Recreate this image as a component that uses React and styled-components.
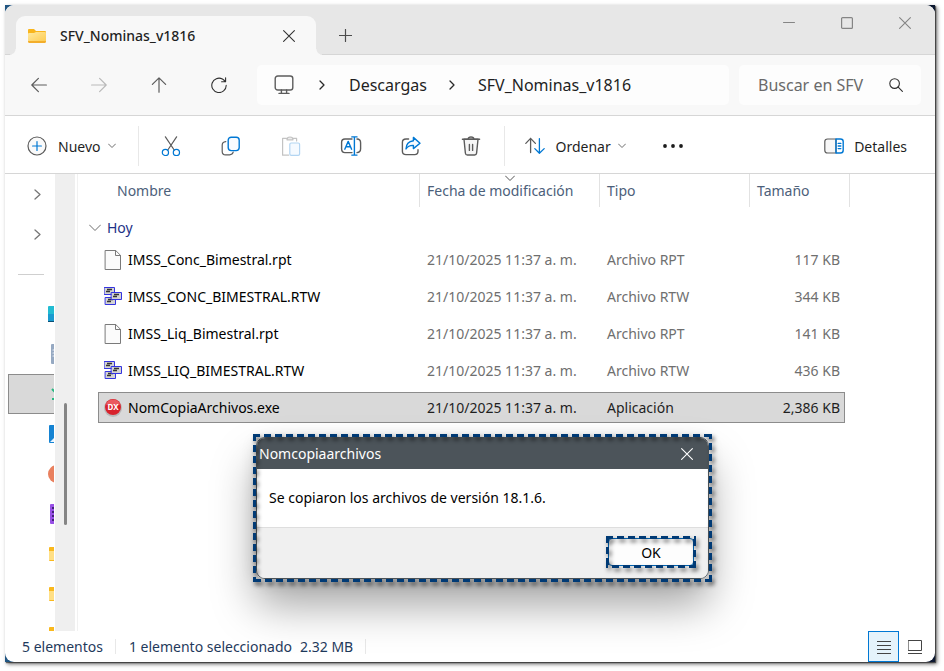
import React from 'react';
import styled, { createGlobalStyle, css } from 'styled-components';

const colors = {
    strip: '#e7e7e7',
    nav: '#f8f8f8',
    line: '#d6d6d6',
    text: '#1f1f1f',
    muted: '#6f6f6f',
    header: '#4c607a',
    group: '#1e3287',
    status: '#1f3a5c',
    selected: '#d9d9d9',
    selectedLine: '#8c8c8c',
    blue: '#0078d4',
    ink: '#5c5c5c',
    navy: '#003a75',
    slate: '#4c545a'
};

const GlobalStyle = createGlobalStyle`
    * {
        box-sizing: border-box;
    }
    body {
        margin: 0;
        background: #fff;
    }
    body, button, input {
        font-family: 'Noto Sans', 'Open Sans', sans-serif;
        font-size: 14px;
        color: ${colors.text};
    }
`;

const Page = styled.div`
    display: flex;
    height: 100vh;
    padding: 5px 9px 9px 5px;
`;
const Backdrop = styled.div`
    position: relative;
    display: flex;
    flex: 1;
    min-width: 0;
    background: linear-gradient(to right, #205582 0%, #0b1730 50%);
    box-shadow: 1px 1px 1px rgba(0, 0, 0, 0.5), 2px 2px 4px rgba(0, 0, 0, 0.6);
`;
const Window = styled.main`
    display: flex;
    flex-direction: column;
    flex: 1;
    min-width: 0;
    overflow: hidden;
    border-radius: 9px;
    background: #fff;
`;
const PlainButton = styled.button`
    display: flex;
    align-items: center;
    justify-content: center;
    padding: 0;
    border: 0;
    background: none;
`;

const TabStrip = styled.header`
    display: flex;
    align-items: flex-end;
    height: 50px;
    padding: 0 1px 0 11px;
    border-bottom: 1px solid ${colors.line};
    background: ${colors.strip};
`;
const Tab = styled.div`
    position: relative;
    display: flex;
    align-items: center;
    gap: 14px;
    width: 300px;
    height: 39px;
    margin-bottom: -1px;
    padding: 0 21px 0 12px;
    border-radius: 9px 9px 0 0;
    background: ${colors.nav};
    &::before, &::after {
        content: '';
        position: absolute;
        bottom: 0;
        width: 6px;
        height: 6px;
    }
    &::before {
        right: 100%;
        background: radial-gradient(circle at 0 0, transparent 5px, ${colors.nav} 6px);
    }
    &::after {
        left: 100%;
        background: radial-gradient(circle at 100% 0, transparent 5px, ${colors.nav} 6px);
    }
`;
const TabTitle = styled.span`
    flex: 1;
    font-weight: 500;
`;
const NewTab = styled(PlainButton)`
    width: 58px;
    height: 38px;
`;
const Caption = styled.div`
    display: flex;
    align-self: flex-start;
    margin-left: auto;
`;
const CaptionButton = styled(PlainButton)`
    width: 58px;
    height: 36px;
`;

const NavBar = styled.nav`
    display: flex;
    align-items: center;
    gap: 10px;
    height: 61px;
    padding-right: 14px;
    border-bottom: 1px solid ${colors.line};
    background: ${colors.nav};
`;
const NavButtons = styled.div`
    display: flex;
    padding-left: 4px;
`;
const NavButton = styled(PlainButton)`
    width: 60px;
    height: 40px;
`;
const Address = styled.div`
    display: flex;
    align-items: center;
    flex: 1;
    height: 40px;
    margin-left: -2px;
    padding-left: 17px;
    border-radius: 5px;
    background: #fdfdfd;
`;
const Crumb = styled.a`
    font-size: 16px;
    color: ${colors.text};
    text-decoration: none;
`;
const CrumbArrow = styled.span`
    display: flex;
    justify-content: center;
    width: ${props => props.$width}px;
`;
const Search = styled.label`
    display: flex;
    align-items: center;
    width: 182px;
    height: 40px;
    padding: 0 18px 0 19px;
    border-radius: 5px;
    background: #fdfdfd;
`;
const SearchInput = styled.input`
    flex: 1;
    min-width: 0;
    margin-right: 24px;
    padding: 0;
    border: 0;
    outline: 0;
    background: none;
    font-size: 16px;
    &::placeholder {
        color: #6a6a6a;
        opacity: 1;
    }
`;

const Toolbar = styled.div`
    display: flex;
    align-items: center;
    height: 58px;
    padding: 3px 28px 0 22px;
    border-bottom: 1px solid ${colors.line};
    background: #fff;
`;
const ToolButton = styled(PlainButton)`
    gap: 11px;
    height: 40px;
`;
const IconButton = styled(PlainButton)`
    width: 60px;
    height: 40px;
`;
const MoreButton = styled(IconButton)`
    width: 20px;
    margin-left: 37px;
`;
const MenuLabel = styled.span`
    display: flex;
    align-items: center;
    gap: 7px;
`;
const Divider = styled.span`
    flex: none;
    width: 1px;
    height: ${props => props.$height}px;
    margin: 0 ${props => props.$after}px 0 ${props => props.$before}px;
    background: #e8e8e8;
`;
const Details = styled(ToolButton)`
    gap: 10px;
    margin-left: auto;
`;

const Content = styled.div`
    display: flex;
    flex: 1;
    min-height: 0;
`;
const Sidebar = styled.ul`
    width: 49px;
    margin: 0;
    padding: 0 0 0 3px;
    overflow: hidden;
    list-style: none;
`;
const SideItem = styled.li`
    display: flex;
    align-items: center;
    height: 40px;
    padding-left: ${props => props.$indent}px;
    overflow: hidden;
    border: 1px solid transparent;
    border-right: 0;
    ${props => props.$selected && css`
        border-color: ${colors.selectedLine};
        background: ${colors.selected};
    `}
    svg {
        flex: none;
    }
`;
const SideRule = styled.hr`
    width: 26px;
    margin: 0;
    border: 0;
    border-top: 1px solid #cfcfcf;
`;
const ScrollTrack = styled.div`
    display: flex;
    flex-direction: column;
    align-items: center;
    width: 20px;
    margin: 0 2px 0 1px;
    background: #efefef;
`;
const ScrollThumb = styled.div`
    width: 3px;
    height: 122px;
    margin-top: 229px;
    border-radius: 2px;
    background: #858585;
`;
const FilePane = styled.section`
    flex: 1;
    min-width: 0;
    padding: 0 90px 0 20px;
    border-left: 1px solid #f1f1f1;
`;

const FileTable = styled.table`
    display: block;
    thead, tbody {
        display: block;
    }
`;
const Row = styled.tr`
    display: grid;
    grid-template-columns: minmax(200px, 1fr) 180px 150px 95px;
    align-items: center;
`;
const HeadRow = styled(Row)`
    align-items: stretch;
    height: 33px;
    margin-right: -5px;
    grid-template-columns: minmax(200px, 1fr) 180px 150px 100px;
`;
const HeadCell = styled.th`
    position: relative;
    padding: 7px 0 0 ${props => props.$indent || 7}px;
    border-right: 1px solid #e2e2e2;
    line-height: 20px;
    font-weight: 400;
    text-align: left;
    color: ${colors.header};
`;
const SortMark = styled.span`
    position: absolute;
    top: 1px;
    left: 0;
    right: 0;
    display: flex;
    justify-content: center;
`;
const GroupCell = styled.th`
    display: flex;
    align-items: center;
    gap: 6px;
    height: 37px;
    padding: 4px 0 0;
    margin-left: -9px;
    font-weight: 400;
    color: ${colors.group};
`;
const FileRow = styled(Row)`
    height: 31px;
    margin-bottom: 6px;
    border: 1px solid transparent;
    color: ${colors.muted};
    &:last-child {
        margin-bottom: 0;
    }
    ${props => props.$selected && css`
        border-color: ${colors.selectedLine};
        background: ${colors.selected};
        color: ${colors.text};
    `}
`;
const Cell = styled.td`
    padding: 1px 4px 0 8px;
    line-height: 20px;
    white-space: nowrap;
    text-align: ${props => (props.$right ? 'right' : 'left')};
`;
const NameCell = styled(Cell)`
    display: flex;
    align-items: center;
    gap: 6px;
    padding-left: 5px;
    color: #000;
`;

const StatusBar = styled.footer`
    display: flex;
    align-items: center;
    height: 31px;
    padding: 0 5px 0 17px;
    color: ${colors.status};
`;
const StatusSize = styled.span`
    margin-left: 8px;
`;
const Views = styled.div`
    display: flex;
    margin-left: auto;
`;
const ViewButton = styled(PlainButton)`
    width: 31px;
    height: 31px;
    ${props => props.$active && css`
        border: 1px solid ${colors.blue};
        background: #e5f3fb;
    `}
`;

const dash = angle => `repeating-linear-gradient(${angle}, ${colors.navy} 0 7px, transparent 7px 11px)`;

// dashed highlight drawn around the dialog and its button
const highlight = css`
    &::before {
        content: '';
        position: absolute;
        inset: -3px;
        background:
            ${dash('90deg')} top / 100% 3px no-repeat,
            ${dash('270deg')} bottom / 100% 3px no-repeat,
            ${dash('180deg')} left / 3px 100% no-repeat,
            ${dash('0deg')} right / 3px 100% no-repeat;
        filter: drop-shadow(2px 3px 2px rgba(0, 0, 0, 0.6));
        pointer-events: none;
    }
`;
const Dialog = styled.div`
    position: absolute;
    top: 432px;
    left: 251px;
    width: 453px;
    border-radius: 9px;
    box-shadow: 0 26px 44px rgba(0, 0, 0, 0.36), 0 2px 16px rgba(0, 0, 0, 0.14);
    ${highlight}
`;
const DialogBox = styled.div`
    overflow: hidden;
    border: 1px solid ${colors.slate};
    border-radius: 9px;
    background: #fff;
`;
const DialogTitle = styled.div`
    display: flex;
    align-items: center;
    justify-content: space-between;
    height: 31px;
    padding: 0 15px 0 2px;
    background: ${colors.slate};
    color: #fff;
`;
const DialogText = styled.p`
    margin: 0;
    padding: 19px 12px;
    line-height: 20px;
    color: #000;
`;
const DialogFooter = styled.div`
    display: flex;
    justify-content: flex-end;
    padding: 10px 14px 12px;
    border-top: 1px solid #dedede;
    background: #f0f0f0;
`;
const OkButton = styled.button`
    position: relative;
    width: 86px;
    height: 28px;
    padding: 0;
    border: 1px solid #0067b8;
    border-radius: 4px;
    background: #fdfdfd;
    color: #000;
    ${highlight}
`;

const Svg = ({ w = 20, h = w, stroke = colors.ink, sw = 1.2, children }) => (
    <svg width={w} height={h} viewBox={`0 0 ${w} ${h}`} fill="none" stroke={stroke} strokeWidth={sw}
        strokeLinecap="round" strokeLinejoin="round" aria-hidden="true">
        {children}
    </svg>
);

const FolderIcon = () => (
    <Svg w={18} h={16} stroke="none">
        <defs>
            <linearGradient id="folder" x1="0" y1="0" x2="1" y2="1">
                <stop offset="0" stopColor="#ffe9a0" />
                <stop offset="1" stopColor="#fdcb4f" />
            </linearGradient>
        </defs>
        <path d="M0 2q0-1 1-1h5l2 2h9q1 0 1 1v10H0z" fill="#f9b51c" />
        <path d="M0 6q0-1 1-1h5l2-1h9q1 0 1 1v8q0 1-1 1H1q-1 0-1-1z" fill="url(#folder)" />
        <path d="M0 13q0 2 1 2h16q1 0 1-2z" fill="#f3ae2b" />
    </Svg>
);
const CloseIcon = ({ size = 12, stroke = '#333', sw = 1.1 }) => (
    <Svg w={size} stroke={stroke} sw={sw}>
        <path d={`M.6.6 ${size - 0.6} ${size - 0.6}M${size - 0.6} .6.6 ${size - 0.6}`} />
    </Svg>
);
const PlusIcon = () => <Svg w={13} stroke="#4c4c4c"><path d="M6.5.5v12M.5 6.5h12" /></Svg>;
const MinimizeIcon = () => <Svg w={12} stroke="#858585" sw={1}><path d="M.5 5.5h11" /></Svg>;
const MaximizeIcon = () => <Svg w={12} stroke="#858585"><rect x=".6" y=".6" width="10.8" height="10.8" rx="1" /></Svg>;
const BackIcon = () => <Svg w={16}><path d="M15.4 8H.8M7.4 1.4.8 8l6.6 6.6" /></Svg>;
const ForwardIcon = () => <Svg w={16} stroke="#b9b9b9"><path d="M.6 8h14.6M8.6 1.4 15.2 8l-6.6 6.6" /></Svg>;
const UpIcon = () => <Svg w={16}><path d="M8 15.2V.8M1.4 7.4 8 .8l6.6 6.6" /></Svg>;
const RefreshIcon = () => (
    <Svg w={16} stroke="#303030" sw={1.1}>
        <path d="M15.2 8.4A7.2 7.2 0 1 1 11.4 2q1.4.8 2.8 2.4M14.6.8v4h-4" />
    </Svg>
);
const MonitorIcon = () => (
    <Svg w={20} sw={1.4}>
        <rect x="1.2" y="1" width="17.6" height="14" rx="2.6" />
        <path d="M7.4 15v3M12.6 15v3M5 18.4h10" />
    </Svg>
);
const ChevronRight = ({ stroke = '#2a2a2a', w = 6, h = 10 }) => (
    <Svg w={w} h={h} stroke={stroke} sw={1.3}><path d={`M1 1 ${w - 1} ${h / 2} 1 ${h - 1}`} /></Svg>
);
const ChevronDown = ({ w = 8, stroke = '#6d6d6d' }) => (
    <Svg w={w} h={w / 2 + 2} stroke={stroke} sw={1}><path d={`M.5 1 ${w / 2} ${w / 2 + 0.5} ${w - 0.5} 1`} /></Svg>
);
const SearchIcon = () => (
    <Svg w={14} stroke="#303030" sw={1.1}><circle cx="5.6" cy="5.6" r="4.8" /><path d="m9.2 9.2 4.2 4.2" /></Svg>
);
const NewIcon = () => (
    <Svg w={20}>
        <circle cx="10" cy="10" r="9" fill="#fafafa" />
        <path d="M10 5.6v8.8M5.6 10h8.8" stroke={colors.blue} />
    </Svg>
);
const CutIcon = () => (
    <Svg w={20}>
        <path d="M4.4.8 13.2 14M15.6.8 6.8 14" />
        <g stroke={colors.blue}>
            <circle cx="4.4" cy="16.4" r="3.1" />
            <circle cx="15.4" cy="16.4" r="3.1" />
        </g>
    </Svg>
);
const CopyIcon = () => (
    <Svg w={20}>
        <path d="M4.8 5.6Q1.2 6 1.2 9v6.4q0 3.4 3.4 3.4h4q3 0 3.6-2.6" />
        <rect x="7.2" y="1.2" width="11" height="13.4" rx="3" fill="#f8fbff" stroke={colors.blue} strokeWidth="1.4" />
    </Svg>
);
const PasteIcon = () => (
    <Svg w={20} stroke="#c3c3c3">
        <path d="M6 2.4H1.6v16.8h6M12 2.4h3.6V5" />
        <path d="M6 3.8q0-2.8 3-2.8t3 2.8z" fill="#eee" />
        <rect x="8.8" y="7" width="9.8" height="12.4" rx="1.4" fill="#f5faff" stroke="#b3d5f2" />
    </Svg>
);
const RenameIcon = () => (
    <Svg w={22} h={20} sw={1.4}>
        <path d="M12 3H5Q1.6 3 1.6 6.4v6.4Q1.6 16.6 5 16.6h7M17 3q3.6.2 3.6 3.8v6q0 3.6-3.6 3.8" />
        <g stroke={colors.blue}>
            <path d="M4.8 13.2 8.2 5.4l3.4 7.8M6 10.8h4.4M14.4.9v18.2M11.8.9h5.2M11.8 19.1h5.2" />
        </g>
    </Svg>
);
const ShareIcon = () => (
    <Svg w={20} sw={1.4}>
        <path d="M7.6 3H5Q1.4 3 1.4 6.4v8.8q0 3.4 3.6 3.4h8.6q3.4 0 3.4-3.4v-1.4" />
        <path d="M12.4 1.4 19 7.2l-6.6 5.4V9.4q-5-.2-7.4 3.6.2-7.2 7.4-8.2z" fill="#f5faff" stroke={colors.blue} />
    </Svg>
);
const DeleteIcon = () => (
    <Svg w={20} sw={1.4}>
        <path d="M1.4 3.2h17.2M7.2 3q0-2 2.8-2t2.8 2" />
        <path d="m3 3.2 1.4 14q.2 1.8 2 1.8h7.2q1.8 0 2-1.8L17 3.2z" fill="#f6f6f6" />
        <path d="M8.4 8.4v6M11.6 8.4v6" />
    </Svg>
);
const SortIcon = () => (
    <Svg w={20} h={18} sw={1.3}>
        <path d="M5.6 15.6V1.4M.8 6.4l4.8-5 4.8 5" />
        <path d="M14.4 1.6v14.6M9.8 11.6l4.6 4.6 4.8-4.6" stroke={colors.blue} />
    </Svg>
);
const MoreIcon = () => (
    <Svg w={20} h={4} stroke="none">
        <g fill="#1c1c1c"><circle cx="2" cy="2" r="1.9" /><circle cx="10" cy="2" r="1.9" /><circle cx="18" cy="2" r="1.9" /></g>
    </Svg>
);
const DetailsIcon = () => (
    <Svg w={20} h={16}>
        <path d="M12 1H3.6Q.8 1 .8 3.6v8.6q0 2.8 2.8 2.8H12z" fill="#f7f7f7" />
        <path d="M12 1h4.4q2.8 0 2.8 2.6v8.6q0 2.8-2.8 2.8H12zM14.2 5.4h2.6M14.2 8h2.6M14.2 10.6h2.6" stroke={colors.blue} strokeWidth="1.4" />
    </Svg>
);

const PageIcon = () => (
    <Svg w={18} h={20} stroke="#7a7a7a" sw={1}>
        <path d="M1.5.5h10.2l4.8 4.8v14.2h-15z" fill="#fbfbfb" strokeLinejoin="miter" />
        <path d="M11.5.5v5h5" />
    </Svg>
);
const Sheet = ({ x, y }) => (
    <g>
        <rect x={x + 0.5} y={y + 0.5} width="10" height="7" fill="#d4d4d4" stroke="#3434e0" />
        <path d={`M${x + 3} ${y + 2.5}h5M${x + 2} ${y + 4.5}h4`} stroke="#333" strokeLinecap="butt" strokeWidth="1.4" />
    </g>
);
const ReportIcon = () => (
    <Svg w={18} h={20} sw={1}>
        <Sheet x={0} y={0} />
        <Sheet x={1} y={10} />
        <Sheet x={7} y={5} />
    </Svg>
);
const ExeIcon = () => (
    <Svg w={18} h={20} stroke="none">
        <circle cx="9" cy="10" r="9" fill="#b9b9b9" />
        <circle cx="9" cy="9" r="8" fill="#d8222c" />
        <path d="M1.8 6.4a7.8 7.8 0 0 1 14.4 0q-7 2-14.4 0z" fill="#ea5a60" />
        <text x="9" y="12" fontSize="8" fontWeight="700" textAnchor="middle" fill="#fff">DX</text>
    </Svg>
);

const DesktopIcon = () => (
    <Svg w={18} h={16} stroke="none">
        <rect width="18" height="16" rx="1" fill="#22bcd2" />
        <path d="M0 8h18v7H0z" fill="#1a9bd0" /><path d="M0 15h18v1H0z" fill="#0c4f74" />
    </Svg>
);
const DocumentIcon = () => (
    <Svg w={12} h={20} stroke="none">
        <rect width="12" height="20" rx="1" fill="#96a9c2" />
        <path d="M2 6h8M2 9h8M2 12h8" stroke="#e7edf5" />
    </Svg>
);
const DownloadIcon = () => (
    <Svg w={16} h={14} stroke="#28b883" sw={2}><path d="m1 2 6 6 6-6M1 12h14" strokeLinecap="butt" /></Svg>
);
const PicturesIcon = () => (
    <Svg w={18} h={18} stroke="none">
        <rect width="18" height="18" rx="1" fill="#1583d2" /><path d="m1 17 8-8 8 8z" fill="#eaf5ff" />
    </Svg>
);
const MusicIcon = () => <Svg w={18} stroke="none"><circle cx="9" cy="9" r="9" fill="#e9805e" /></Svg>;
const VideosIcon = () => (
    <Svg w={18} h={20} stroke="none">
        <rect width="18" height="20" rx="1" fill="#9850e6" />
        <path d="M3 3v16" stroke="#43217a" strokeWidth="2" strokeDasharray="2 2" strokeLinecap="butt" />
    </Svg>
);
const SideFolderIcon = () => (
    <Svg w={18} h={14} stroke="none">
        <rect width="18" height="14" rx="1" fill="#f9b81d" /><path d="M0 4h18v9H0z" fill="#ffdf85" />
    </Svg>
);
const ListViewIcon = () => (
    <Svg w={14} h={14} stroke="#444" sw={1}><path d="M0 1.5h14M0 5.5h14M0 9.5h14M0 13.5h14" strokeLinecap="butt" /></Svg>
);
const TileViewIcon = () => (
    <Svg w={14} h={14} stroke="#444" sw={1}><rect x=".5" y=".5" width="13" height="10" /><path d="M0 13.5h14" /></Svg>
);

const sideItems = [
    { icon: DesktopIcon, indent: 39 },
    { icon: DocumentIcon, indent: 42 },
    { icon: DownloadIcon, indent: 42, selected: true },
    { icon: PicturesIcon, indent: 40 },
    { icon: MusicIcon, indent: 39 },
    { icon: VideosIcon, indent: 41 },
    { icon: SideFolderIcon, indent: 40 },
    { icon: SideFolderIcon, indent: 40 },
    { icon: SideFolderIcon, indent: 40 }
];

const files = [
    { icon: PageIcon, name: 'IMSS_Conc_Bimestral.rpt', type: 'Archivo RPT', size: '117 KB' },
    { icon: ReportIcon, name: 'IMSS_CONC_BIMESTRAL.RTW', type: 'Archivo RTW', size: '344 KB' },
    { icon: PageIcon, name: 'IMSS_Liq_Bimestral.rpt', type: 'Archivo RPT', size: '141 KB' },
    { icon: ReportIcon, name: 'IMSS_LIQ_BIMESTRAL.RTW', type: 'Archivo RTW', size: '436 KB' },
    { icon: ExeIcon, name: 'NomCopiaArchivos.exe', type: 'Aplicación', size: '2,386 KB', selected: true }
];

const Tabs = () => (
    <TabStrip>
        <Tab>
            <FolderIcon />
            <TabTitle>SFV_Nominas_v1816</TabTitle>
            <PlainButton aria-label="Cerrar pestaña"><CloseIcon /></PlainButton>
        </Tab>
        <NewTab aria-label="Nueva pestaña"><PlusIcon /></NewTab>
        <Caption>
            <CaptionButton aria-label="Minimizar"><MinimizeIcon /></CaptionButton>
            <CaptionButton aria-label="Maximizar"><MaximizeIcon /></CaptionButton>
            <CaptionButton aria-label="Cerrar"><CloseIcon stroke="#858585" /></CaptionButton>
        </Caption>
    </TabStrip>
);

const Navigation = () => (
    <NavBar>
        <NavButtons>
            <NavButton aria-label="Atrás"><BackIcon /></NavButton>
            <NavButton aria-label="Adelante" disabled><ForwardIcon /></NavButton>
            <NavButton aria-label="Arriba"><UpIcon /></NavButton>
            <NavButton aria-label="Actualizar"><RefreshIcon /></NavButton>
        </NavButtons>
        <Address>
            <MonitorIcon />
            <CrumbArrow $width={55}><ChevronRight /></CrumbArrow>
            <Crumb href="#descargas">Descargas</Crumb>
            <CrumbArrow $width={51}><ChevronRight /></CrumbArrow>
            <Crumb href="#nominas">SFV_Nominas_v1816</Crumb>
        </Address>
        <Search>
            <SearchInput type="text" placeholder="Buscar en SFV" aria-label="Buscar" />
            <SearchIcon />
        </Search>
    </NavBar>
);

const Commands = () => (
    <Toolbar>
        <ToolButton>
            <NewIcon />
            <MenuLabel>Nuevo <ChevronDown /></MenuLabel>
        </ToolButton>
        <Divider $height={40} $before={22} $after={2} />
        <IconButton aria-label="Cortar"><CutIcon /></IconButton>
        <IconButton aria-label="Copiar"><CopyIcon /></IconButton>
        <IconButton aria-label="Pegar" disabled><PasteIcon /></IconButton>
        <IconButton aria-label="Cambiar nombre"><RenameIcon /></IconButton>
        <IconButton aria-label="Compartir"><ShareIcon /></IconButton>
        <IconButton aria-label="Eliminar"><DeleteIcon /></IconButton>
        <Divider $height={40} $before={3} $after={20} />
        <ToolButton>
            <SortIcon />
            <MenuLabel>Ordenar <ChevronDown /></MenuLabel>
        </ToolButton>
        <MoreButton aria-label="Ver más"><MoreIcon /></MoreButton>
        <Details><DetailsIcon />Detalles</Details>
    </Toolbar>
);

const Folders = () => (
    <Sidebar>
        <SideItem $indent={25}><ChevronRight stroke="#777" w={7} h={11} /></SideItem>
        <SideItem $indent={25}><ChevronRight stroke="#777" w={7} h={11} /></SideItem>
        <SideItem $indent={9}><SideRule /></SideItem>
        {sideItems.map(({ icon: Icon, indent, selected }, i) => (
            <SideItem key={i} $indent={indent} $selected={selected}><Icon /></SideItem>
        ))}
    </Sidebar>
);

const Files = () => (
    <FileTable>
        <thead>
            <HeadRow>
                <HeadCell $indent={19}>Nombre</HeadCell>
                <HeadCell><SortMark><ChevronDown w={10} stroke="#555" /></SortMark>Fecha de modificación</HeadCell>
                <HeadCell>Tipo</HeadCell>
                <HeadCell>Tamaño</HeadCell>
            </HeadRow>
        </thead>
        <tbody>
            <Row><GroupCell><ChevronDown w={12} />Hoy</GroupCell></Row>
            {files.map(({ icon: Icon, name, type, size, selected }) => (
                <FileRow key={name} $selected={selected}>
                    <NameCell><Icon />{name}</NameCell>
                    <Cell>21/10/2025 11:37 a. m.</Cell>
                    <Cell>{type}</Cell>
                    <Cell $right>{size}</Cell>
                </FileRow>
            ))}
        </tbody>
    </FileTable>
);

const Message = () => (
    <Dialog role="dialog" aria-label="Nomcopiaarchivos">
        <DialogBox>
            <DialogTitle>
                Nomcopiaarchivos
                <PlainButton aria-label="Cerrar mensaje"><CloseIcon stroke="#fff" /></PlainButton>
            </DialogTitle>
            <DialogText>Se copiaron los archivos de versión 18.1.6.</DialogText>
            <DialogFooter><OkButton>OK</OkButton></DialogFooter>
        </DialogBox>
    </Dialog>
);

const App = () => (
    <Page>
        <GlobalStyle />
        <Backdrop>
            <Window>
                <Tabs />
                <Navigation />
                <Commands />
                <Content>
                    <Folders />
                    <ScrollTrack><ScrollThumb /></ScrollTrack>
                    <FilePane><Files /></FilePane>
                </Content>
                <StatusBar>
                    5 elementos
                    <Divider $height={15} $before={12} $after={13} />
                    1 elemento seleccionado
                    <StatusSize>2.32 MB</StatusSize>
                    <Divider $height={15} $before={12} $after={0} />
                    <Views>
                        <ViewButton $active aria-label="Detalles"><ListViewIcon /></ViewButton>
                        <ViewButton aria-label="Iconos grandes"><TileViewIcon /></ViewButton>
                    </Views>
                </StatusBar>
            </Window>
            <Message />
        </Backdrop>
    </Page>
);

export default App;
